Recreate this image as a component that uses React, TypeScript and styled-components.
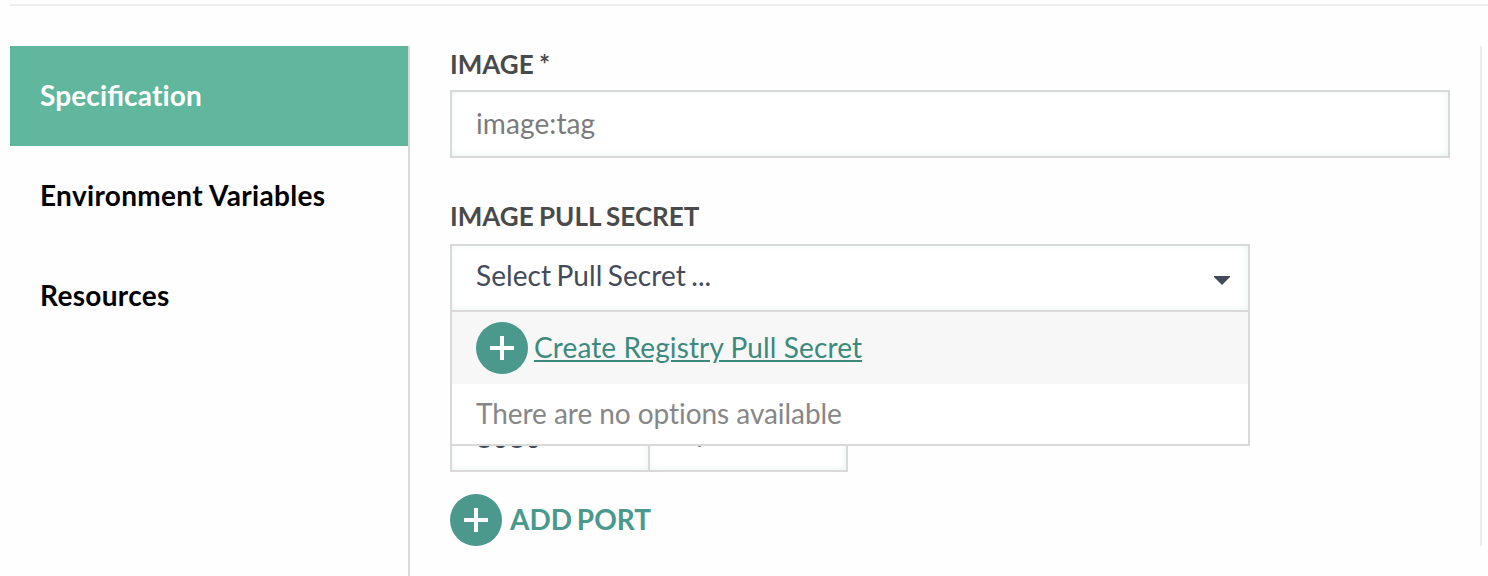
import React from 'react';
import styled, { createGlobalStyle } from 'styled-components';

const GlobalStyle = createGlobalStyle`
  * { box-sizing: border-box; }
  body {
    margin: 0;
    background: #fefefe;
    font-family: Lato, sans-serif;
    font-size: 28px;
    overflow: hidden;
  }
`;

const Page = styled.div`
  height: 576px;
  padding: 4px 0 0 10px;
  overflow: hidden;
`;

const Panel = styled.div`
  display: flex;
  height: 572px;
  padding-top: 40px;
  border-top: 2px solid #eeeeee;
`;

const Sidebar = styled.nav`
  width: 400px;
  border-right: 2px solid #d9d9d9;
`;

const Tab = styled.div<{ $active?: boolean; $tracking: number }>`
  height: 100px;
  padding-left: 30px;
  font-weight: 700;
  line-height: 98px;
  white-space: nowrap;
  letter-spacing: ${(p) => p.$tracking}px;
  color: ${(p) => (p.$active ? '#fff' : '#000')};
  background: ${(p) => (p.$active ? '#60b79e' : 'transparent')};
`;

const Joined = styled.span`
  letter-spacing: 0;
`;

const Content = styled.main`
  width: 1072px;
  height: 500px;
  padding-left: 40px;
  border-right: 2px solid #ececec;
`;

const Label = styled.label<{ $height: number }>`
  display: block;
  height: ${(p) => p.$height}px;
  font-size: 26px;
  font-weight: 700;
  line-height: 36px;
  word-spacing: -0.9px;
  color: #4a4a4a;
`;

const Input = styled.input<{ $width: number; $lift?: number }>`
  display: block;
  width: ${(p) => p.$width}px;
  height: 68px;
  padding: 0 24px ${(p) => p.$lift ?? 2}px;
  border: 2px solid #d9d9d9;
  border-radius: 0;
  outline: none;
  background: #fff;
  box-shadow: inset -1px -1px 6px #eaf4f1;
  font: inherit;
  letter-spacing: 0.1px;
  color: #434a5a;
  &::placeholder { color: #7b7b7b; opacity: 1; }
  & + & { margin-left: -2px; }
  & + &::placeholder { color: #e0e0e0; }
`;

const Select = styled.div`
  position: relative;
  width: 800px;
  margin-bottom: 92px;
`;

const SelectBox = styled.div`
  display: flex;
  align-items: center;
  justify-content: space-between;
  height: 68px;
  padding: 0 18px 6px 24px;
  border: 2px solid #d9d9d9;
  background: #fff;
  box-shadow: inset -1px -1px 6px #eaf4f1;
  letter-spacing: 0.07px;
  word-spacing: -1.8px;
  color: #434a5a;
`;

const Caret = styled.svg`
  margin-top: 10px;
`;

const Menu = styled.div`
  position: absolute;
  top: 68px;
  left: 0;
  width: 100%;
  z-index: 1;
  border: 2px solid #d9d9d9;
  border-top: 0;
  background: #fff;
`;

const CreateOption = styled.div`
  display: flex;
  align-items: center;
  gap: 6px;
  height: 72px;
  padding-left: 24px;
  background: #f7f7f7;
`;

const Link = styled.a`
  padding-bottom: 2px;
  letter-spacing: 0.12px;
  color: #3d8a7c;
  text-decoration: underline;
`;

const EmptyOption = styled.div`
  height: 60px;
  padding-left: 24px;
  line-height: 58px;
  letter-spacing: -0.05px;
  color: #878787;
`;

const PortRow = styled.div`
  display: flex;
  margin-bottom: 22px;
`;

const AddPort = styled.button`
  display: flex;
  align-items: center;
  gap: 8px;
  padding: 0;
  border: 0;
  background: none;
  font: inherit;
  font-weight: 700;
  word-spacing: -2px;
  color: #4a998c;
`;

const AddPortText = styled.span`
  padding-bottom: 2px;
`;

const Field = styled.div`
  height: 152px;
`;

const PlusIcon = () => (
  <svg width="52" height="52" viewBox="0 0 52 52">
    <circle cx="26" cy="26" r="26" fill="#4a998c" />
    <path d="M14 26H38M26 14V38" stroke="#fff" strokeWidth="4" />
  </svg>
);

export default function App() {
  return (
    <Page>
      <GlobalStyle />
      <Panel>
        <Sidebar>
          <Tab $active $tracking={0.14}>
            Speci<Joined>fi</Joined>cation
          </Tab>
          <Tab $tracking={0.32}>Environment Variables</Tab>
          <Tab $tracking={0.32}>Resources</Tab>
        </Sidebar>
        <Content>
          <Field>
            <Label $height={44}>IMAGE *</Label>
            <Input $width={1000} placeholder="image:tag" />
          </Field>
          <Label $height={46}>IMAGE PULL SECRET</Label>
          <Select>
            <SelectBox>
              Select Pull Secret ...
              <Caret width="16" height="9" viewBox="0 0 16 9">
                <path d="M0 0H16V1L8 9L0 1Z" fill="#434a5a" />
              </Caret>
            </SelectBox>
            <Menu>
              <CreateOption>
                <PlusIcon />
                <Link>Create Registry Pull Secret</Link>
              </CreateOption>
              <EmptyOption>There are no options available</EmptyOption>
            </Menu>
          </Select>
          <PortRow>
            <Input $width={200} defaultValue="8080" />
            <Input $width={200} $lift={14} placeholder="Optional" />
          </PortRow>
          <AddPort>
            <PlusIcon />
            <AddPortText>ADD PORT</AddPortText>
          </AddPort>
        </Content>
      </Panel>
    </Page>
  );
}
